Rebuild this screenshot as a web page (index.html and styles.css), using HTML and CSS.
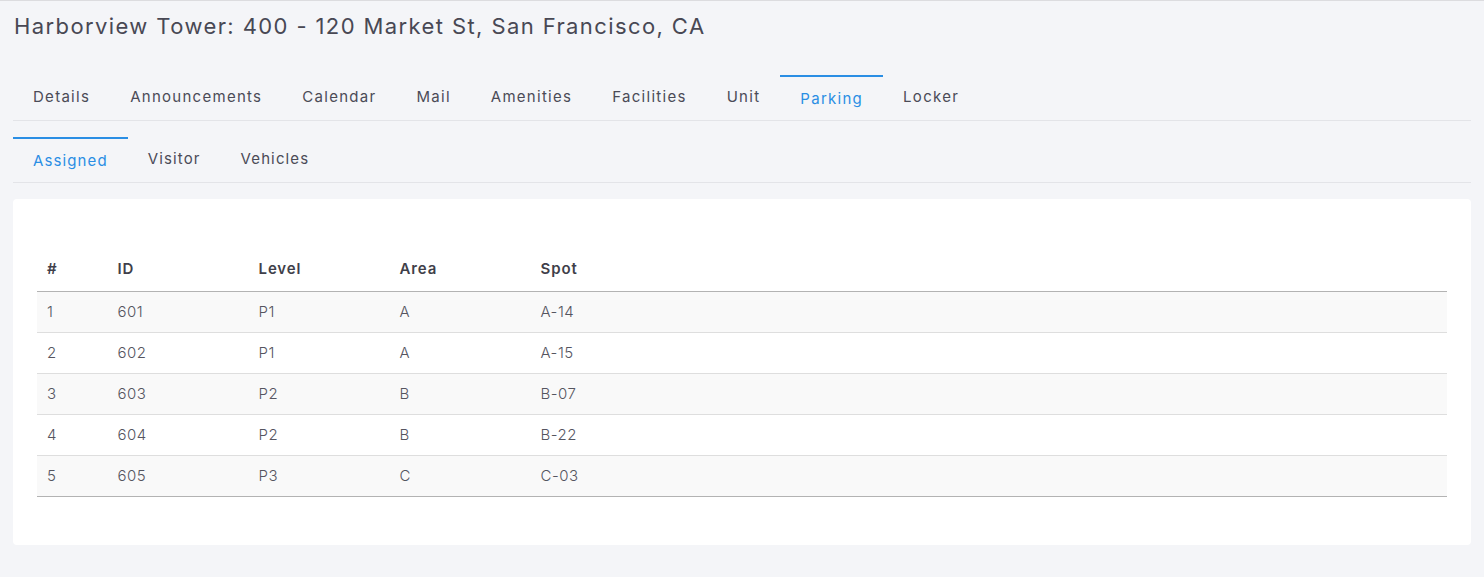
FILE: index.html
```html
<!DOCTYPE html>
<html lang="en">
<head>
<meta charset="utf-8">
<title>Harborview Tower – Parking</title>
<link rel="stylesheet" href="styles.css">
</head>
<body>
<div class="page">
  <h1 class="title">Harborview Tower: 400 - 120 Market St, San Francisco, CA</h1>
  <nav class="tabs">
    <a class="tab">Details</a>
    <a class="tab">Announcements</a>
    <a class="tab">Calendar</a>
    <a class="tab">Mail</a>
    <a class="tab">Amenities</a>
    <a class="tab">Facilities</a>
    <a class="tab">Unit</a>
    <a class="tab active">Parking</a>
    <a class="tab">Locker</a>
  </nav>
  <nav class="tabs subtabs">
    <a class="tab active">Assigned</a>
    <a class="tab">Visitor</a>
    <a class="tab">Vehicles</a>
  </nav>
  <section class="card">
    <table class="grid">
      <thead>
        <tr><th class="c-num">#</th><th class="c-col">ID</th><th class="c-col">Level</th><th class="c-col">Area</th><th>Spot</th></tr>
      </thead>
      <tbody>
        <tr><td>1</td><td>601</td><td>P1</td><td>A</td><td>A-14</td></tr>
        <tr><td>2</td><td>602</td><td>P1</td><td>A</td><td>A-15</td></tr>
        <tr><td>3</td><td>603</td><td>P2</td><td>B</td><td>B-07</td></tr>
        <tr><td>4</td><td>604</td><td>P2</td><td>B</td><td>B-22</td></tr>
        <tr><td>5</td><td>605</td><td>P3</td><td>C</td><td>C-03</td></tr>
      </tbody>
    </table>
  </section>
</div>
</body>
</html>
```

FILE: styles.css
```css
* { box-sizing: border-box; }
html, body { margin: 0; padding: 0; }
body {
  background: #f4f5f8;
  font-family: Inter, "Noto Sans", sans-serif;
  color: #4b4b57;
  border-top: 1px solid #dcdcdf;
}
.page {
  padding: 0 13px 24px 13px;
}
.title {
  margin: 0;
  padding: 10px 0 0 1px;
  font-size: 22px;
  line-height: 30px;
  font-weight: 400;
  color: #484854;
  letter-spacing: 1.4px;
}
.tabs {
  display: flex;
  align-items: flex-start;
  margin-top: 34px;
  border-bottom: 1px solid #e3e4e8;
  height: 46px;
}
.tab {
  padding: 11px 20px 11px 20px;
  font-size: 15px;
  line-height: 22px;
  color: #4b4b57;
  letter-spacing: 1.28px;
  white-space: nowrap;
}
.tab.active {
  color: #2a8ee4;
  border-top: 2px solid #2a8ee4;
}
.subtabs {
  margin-top: 16px;
}
.subtabs .tab {
  letter-spacing: 1.12px;
}
.card {
  margin-top: 16px;
  background: #fff;
  border-radius: 4px;
  padding: 24px;
}
.grid {
  width: 100%;
  border-collapse: collapse;
  margin: 23px 0 24px 0;
  font-size: 15px;
}
.grid th {
  text-align: left;
  font-weight: 600;
  color: #3f3f4a;
  padding: 12px 10px 11px 10px;
  line-height: 22px;
  border-bottom: 1px solid #b3b3b3;
  letter-spacing: 0.9px;
}
.grid td {
  padding: 9px 10px 10px 10px;
  line-height: 21px;
  font-weight: 300;
  color: #55555f;
  border-bottom: 1px solid #dedede;
  letter-spacing: 0.5px;
}
.grid tbody tr:nth-child(odd) td { background: #f9f9f9; }
.grid tbody tr:last-child td { border-bottom: 1px solid #b3b3b3; }
.c-num { width: 5%; }
.c-col { width: 10%; }
```
